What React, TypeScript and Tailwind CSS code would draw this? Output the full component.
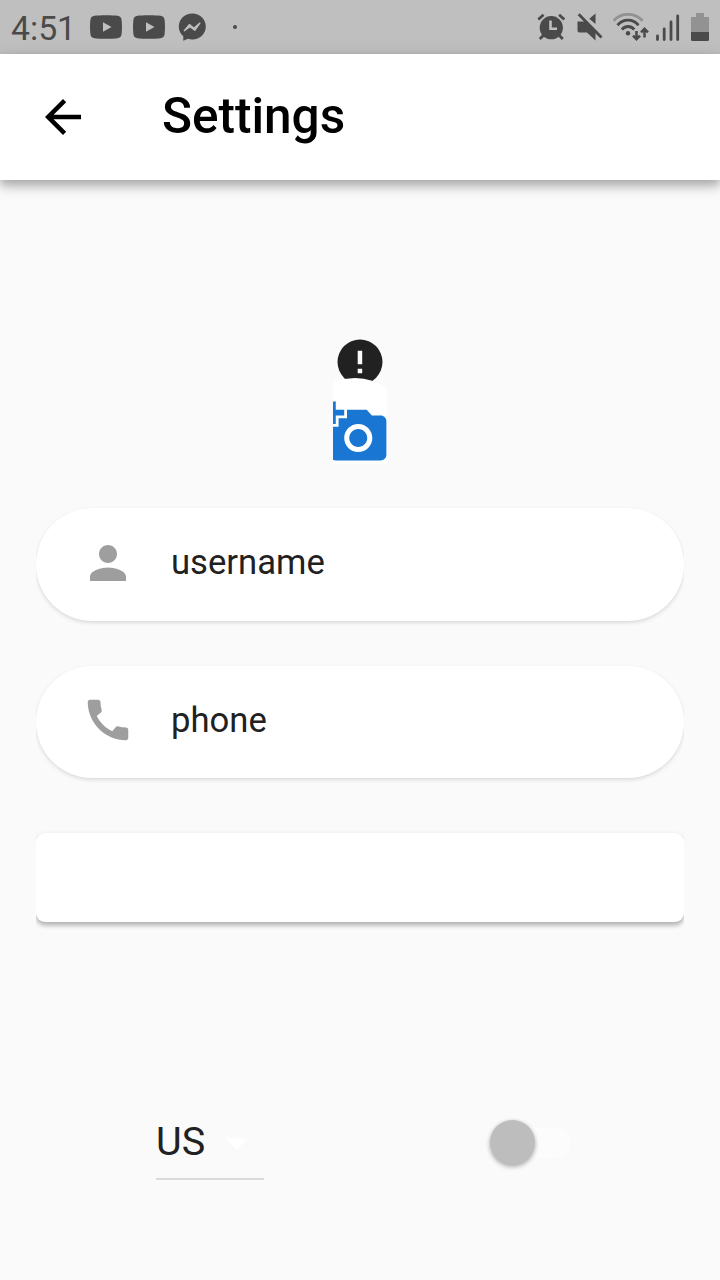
import React from "react";

const INK = "#4a4a4a";

function YoutubeIcon() {
  return (
    <svg width="32" height="24" viewBox="0 0 32 24">
      <path d="M4.500.8C9 .1 23 .1 27.500.8 30 1.200 31.300 2.500 31.600 5c.5 4 .5 10 0 14-.3 2.500-1.600 3.800-4.100 4.200C23 23.900 9 23.900 4.500 23.200 2 22.800.7 21.500.4 19-.1 15-.1 9 .4 5 .7 2.500 2 1.200 4.500.8z" fill={INK} />
      <path d="M13 7.300v9.400l8.500-4.700z" fill="#bfbfbf" />
    </svg>
  );
}

function MessengerIcon() {
  return (
    <svg width="28" height="28" viewBox="0 0 28 28">
      <path d="M14.300.5C6.600.5.800 6.200.800 13.600c0 4 1.700 7.400 4.500 9.700v4.400l4.600-2c1.400.5 2.900.7 4.400.7 7.700 0 13.500-5.600 13.500-12.900S22 .5 14.300.5z" fill={INK} />
      <path d="M6.300 17.700l5.200-6.200 4.400 3.800 6-5.200-5.100 7.200-4.800-3.500z" fill="#bfbfbf" stroke="#bfbfbf" strokeWidth="1.300" strokeLinejoin="round" />
    </svg>
  );
}

function StatusBar() {
  return (
    <header className="flex h-[54px] items-center bg-[#bfbfbf] pl-[11px] pr-[11px]">
      <span className="w-[79px] shrink-0 pt-[3px] text-[33.750px] leading-none text-[#4a4a4a]">4:51</span>
      <YoutubeIcon />
      <span className="w-[11px]" />
      <YoutubeIcon />
      <span className="w-[13px]" />
      <MessengerIcon />
      <span className="ml-[27px] size-1 rounded-full bg-[#4a4a4a]" />
      <span className="grow" />
      <svg width="28" height="28" viewBox="0 0 28 28" className="mr-[12px]">
        <circle cx="14.300" cy="14.700" r="11.600" fill={INK} />
        <path d="M1.300 6.500L6.500 1.800M27.300 6.500L22.100 1.800" stroke={INK} strokeWidth="2.800" />
        <path d="M6.800 22l-4 4M21.800 22l4 4" stroke={INK} strokeWidth="2.800" />
        <path d="M13.500 7.500v8.200h6.500" fill="none" stroke="#bfbfbf" strokeWidth="2.600" />
      </svg>
      <svg width="26" height="28" viewBox="0 0 26 28" className="mr-[10px]">
        <path d="M.500 8.500h8.500L18.500 18.400V27.500L10 19.500H2.500a2 2 0 0 1-2-2z" fill={INK} />
        <path d="M18.500.4V11L12.300 5.700z" fill={INK} />
        <path d="M1.700 1.300L24.500 24.500" stroke={INK} strokeWidth="2.800" />
      </svg>
      <svg width="36" height="28" viewBox="0 0 36 28" className="mr-[7px]">
        <g fill="none" strokeWidth="2.800">
          <path d="M.500 7.700C8.500-.8 21.500-.8 29.500 7.700" stroke="#929292" />
          <path d="M4.500 12.200C10.500 5.500 19.500 5.500 25.500 12.200" stroke={INK} />
          <path d="M8.800 16.500c3.600-4 9-4 12.500 0" stroke={INK} />
        </g>
        <circle cx="15" cy="20.300" r="2.200" fill={INK} />
        <g fill="none" stroke={INK} strokeWidth="2.500">
          <path d="M23.500 18v8M20 22.700l3.500 3.500 3.500-3.500" />
          <path d="M31.500 24.500V16M28 19.300L31.500 15.800l3.500 3.500" />
        </g>
      </svg>
      <svg width="24" height="28" viewBox="0 0 24 28" className="mr-[11px]">
        <path d="M1.500 23v3.500M8.200 16v10.500M15 9v17.500M21.700 3v23.500" stroke={INK} strokeWidth="2.800" strokeLinecap="round" />
      </svg>
      <svg width="18" height="28" viewBox="0 0 18 28">
        <path d="M5 0h8v4h5v15H0V4h5z" fill="#929292" />
        <path d="M0 19h18v7.500q0 1.500-1.500 1.500h-15Q0 28 0 26.500z" fill={INK} />
      </svg>
    </header>
  );
}

function AppBar() {
  return (
    <div className="z-10 flex h-[126px] items-center bg-white pl-9 shadow-[0_4px_9px_rgba(0,0,0,0.24),0_9px_11px_rgba(0,0,0,0.10),0_2px_20px_rgba(0,0,0,0.06)]">
      <svg width="54" height="54" viewBox="0 0 24 24">
        <path d="M20 11H7.830l5.590-5.590L12 4l-8 8 8 8 1.410-1.410L7.830 13H20v-2z" />
      </svg>
      <h1 className="ml-[72px] text-[49.500px] leading-none font-medium text-black">Settings</h1>
    </div>
  );
}

function Avatar() {
  return (
    <svg width="54" height="130" viewBox="333 335 54 130" className="mt-[155px] self-center">
      <circle cx="360" cy="362" r="22.500" fill="#212121" />
      <path d="M357.700 350.700h4.500v13.500h-4.500zM357.700 368.700h4.500v4.500h-4.500z" fill="#fafafa" />
      <path d="M333 381.500Q344 378 355 378Q373 378.500 387 388V464H333z" fill="#fff" />
      <g transform="translate(321.700 398.600) scale(2.8125)" fill="#1976d2">
        <path d="M3 4V1h2v3h3v2H5v3H3V6H0V4h3zm3 6V7h3V4h7l1.830 2H21c1.100 0 2 .9 2 2v12c0 1.100-.9 2-2 2H5c-1.100 0-2-.9-2-2V10h3zm7 9c2.760 0 5-2.240 5-5s-2.240-5-5-5-5 2.240-5 5 2.240 5 5 5zm-3.200-5c0 1.770 1.430 3.200 3.200 3.200s3.200-1.430 3.200-3.200-1.430-3.200-3.200-3.200-3.200 1.430-3.200 3.200z" />
      </g>
    </svg>
  );
}

function Field({ label, icon }: { label: string; icon: string }) {
  return (
    <div className="flex h-[112.500px] items-center rounded-full bg-white pb-[4px] pl-[45px] shadow-[0_2px_4px_rgba(0,0,0,0.11),0_1px_3px_rgba(0,0,0,0.03)]">
      <svg width="54" height="54" viewBox="0 0 24 24" fill="#9e9e9e">
        <path d={icon} />
      </svg>
      <span className="ml-9 text-[34.650px] leading-none text-[#212121]">{label}</span>
    </div>
  );
}

const PERSON =
  "M12 12c2.210 0 4-1.790 4-4s-1.790-4-4-4-4 1.790-4 4 1.790 4 4 4zm0 2c-2.670 0-8 1.340-8 4v2h16v-2c0-2.660-5.330-4-8-4z";
const PHONE =
  "M20.010 15.380c-1.230 0-2.420-.2-3.530-.56-.35-.12-.74-.03-1.010.24l-1.570 1.970c-2.830-1.350-5.480-3.900-6.890-6.830l1.950-1.660c.27-.28.35-.67.24-1.020-.37-1.110-.56-2.300-.56-3.530 0-.54-.45-.99-.99-.99H4.190C3.650 3 3 3.240 3 3.990 3 13.280 10.730 21 20.010 21c.71 0 .99-.63.99-1.180v-3.450c0-.54-.45-.99-.99-.99z";

export default function App() {
  return (
    <div className="flex h-[1280px] w-[720px] flex-col overflow-hidden bg-[#fafafa] font-['Roboto',sans-serif]">
      <StatusBar />
      <AppBar />
      <Avatar />
      <main className="mx-9 mt-[43.400px] flex flex-col gap-[45px] overflow-x-clip">
        <Field label="username" icon={PERSON} />
        <Field label="phone" icon={PHONE} />
        <div className="mt-[9.400px] h-[89.600px] rounded-[9px] bg-white shadow-[0_4px_4px_rgba(0,0,0,0.22),0_1px_5px_rgba(0,0,0,0.10)]" />
      </main>
      <div className="mt-[195.600px] flex items-start pl-[156px]">
        <div className="flex h-[62px] w-[108px] items-start justify-between border-b-2 border-[#dadada]">
          <span className="pt-[4px] text-[39.600px] leading-none text-[#212121]">US</span>
          <svg width="54" height="54" viewBox="0 0 24 24" className="-mt-[2px] text-white">
            <path d="M7 10l5 5 5-5z" fill="currentColor" />
          </svg>
        </div>
        <div className="ml-[233px] mt-[9.500px] flex h-[31px] w-[74px] items-center rounded-full bg-[#fcfcfc]">
          <span className="-ml-[7px] size-[45px] shrink-0 rounded-full bg-[#bdbdbd] shadow-[0_2px_5px_rgba(0,0,0,0.24),0_1px_4px_rgba(0,0,0,0.12)]" />
        </div>
      </div>
    </div>
  );
}
